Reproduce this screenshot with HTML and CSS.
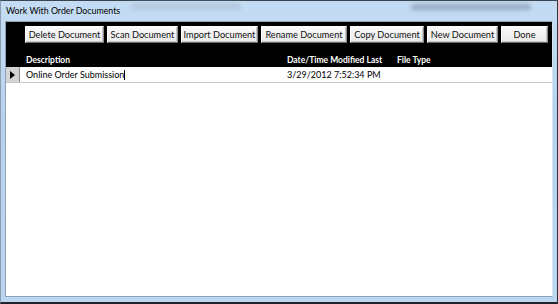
FILE: index.html
```html
<!DOCTYPE html>
<html lang="en">
<head>
  <meta charset="UTF-8" />
  <title>Work With Order Documents</title>
  <link rel="stylesheet" href="styles.css">
</head>
<body>

  <div class="window">
    <div class="titlebar">
      <span class="title">Work With Order Documents</span>
      <div class="blur blur1"></div>
      <div class="blur blur2"></div>
    </div>

    <div class="client">
      <div class="form-header">
        <div class="buttons">
          <button class="btn w-delete">Delete Document</button>
          <button class="btn w-scan">Scan Document</button>
          <button class="btn w-import">Import Document</button>
          <button class="btn w-rename">Rename Document</button>
          <button class="btn w-copy">Copy Document</button>
          <button class="btn w-new">New Document</button>
          <button class="btn w-done">Done</button>
        </div>
        <div class="columns">
          <span class="col-desc">Description</span>
          <span class="col-date">Date/Time Modified Last</span>
          <span class="col-type">File Type</span>
        </div>
      </div>

      <div class="record">
        <div class="selector"><span class="arrow"></span></div>
        <span class="col-desc">Online Order Submission<span class="caret"></span></span>
        <span class="col-date">3/29/2012 7:52:34 PM</span>
        <span class="col-type"></span>
      </div>

      <div class="detail"></div>
    </div>
  </div>

</body>
</html>
```

FILE: styles.css
```css
body {
  margin: 0;
  font-family: 'Lato', 'Open Sans', sans-serif;
  font-size: 9px;
  color: #000;
  overflow: hidden;
}

.window {
  width: 558px;
  height: 304px;
  box-sizing: border-box;
  display: flex;
  flex-direction: column;
  background: linear-gradient(to bottom, #c4dcf3, #b7d2ee 40%, #bcd6f0);
  border-top: 1px solid #3a4552;
  border-left: 1px solid #8a9db2;
  border-right: 1px solid #2c333b;
  border-bottom: 2px solid #1d2329;
}

.titlebar {
  position: relative;
  height: 20px;
  flex-shrink: 0;
  display: flex;
  align-items: center;
  padding-left: 5px;
}

.title {
  font-size: 8.8px;
  white-space: nowrap;
  position: relative;
  z-index: 1;
  margin-top: -1px;
}

/* blurred bits of the window behind */
.blur {
  position: absolute;
  border-radius: 4px;
  filter: blur(2px);
}

.blur1 {
  left: 130px;
  top: 2px;
  width: 110px;
  height: 7px;
  background: #a9bfd6;
  opacity: 0.6;
}

.blur2 {
  left: 410px;
  top: 3px;
  width: 120px;
  height: 6px;
  background: #6d7f94;
  opacity: 0.5;
}

.client {
  flex: 1;
  margin: 0 4px 5px 4px;
  background: #fff;
  border: 1px solid #8fa3b8;
  border-right-color: #d7e3ef;
  display: flex;
  flex-direction: column;
}

.form-header {
  background: #000;
  color: #fff;
  height: 45px;
  box-sizing: border-box;
  padding-top: 4px;
}

.buttons {
  display: flex;
  gap: 3px;
  padding-left: 19px;
}

.btn {
  height: 17px;
  padding: 0;
  font-family: inherit;
  font-size: 9.2px;
  white-space: nowrap;
  color: #111;
  background: linear-gradient(to bottom, #fafafa, #e9e9e9);
  border: 1px solid;
  border-color: #fff #8c8c8c #6b6b6b #fff;
  box-shadow: inset -1px -1px 0 #c8c8c8;
  line-height: 14px;
}

.w-delete { width: 79px; }
.w-scan { width: 71px; }
.w-import { width: 77px; }
.w-rename { width: 86px; }
.w-copy { width: 74px; }
.w-new { width: 71px; }
.w-done { width: 47px; }

.columns {
  display: flex;
  font-weight: bold;
  font-size: 8.5px;
  margin-top: 12px;
  white-space: nowrap;
}

.col-desc {
  width: 261px;
  padding-left: 20px;
  white-space: nowrap;
}

.col-date {
  width: 110px;
  white-space: nowrap;
}

.col-type {
  width: 80px;
}

.record {
  display: flex;
  align-items: center;
  height: 15px;
  border-bottom: 1px solid #c8c8c8;
  font-size: 9px;
}

.record .col-desc {
  padding-left: 6px;
}

.selector {
  width: 14px;
  height: 15px;
  box-sizing: border-box;
  background: #d4d4d4;
  border-right: 1px solid #8a8a8a;
  display: flex;
  align-items: center;
  justify-content: center;
}

.arrow {
  width: 0;
  height: 0;
  border-top: 4px solid transparent;
  border-bottom: 4px solid transparent;
  border-left: 5px solid #000;
}

.caret {
  display: inline-block;
  width: 1px;
  height: 10px;
  background: #000;
  vertical-align: -2px;
}

.detail {
  flex: 1;
}
```
